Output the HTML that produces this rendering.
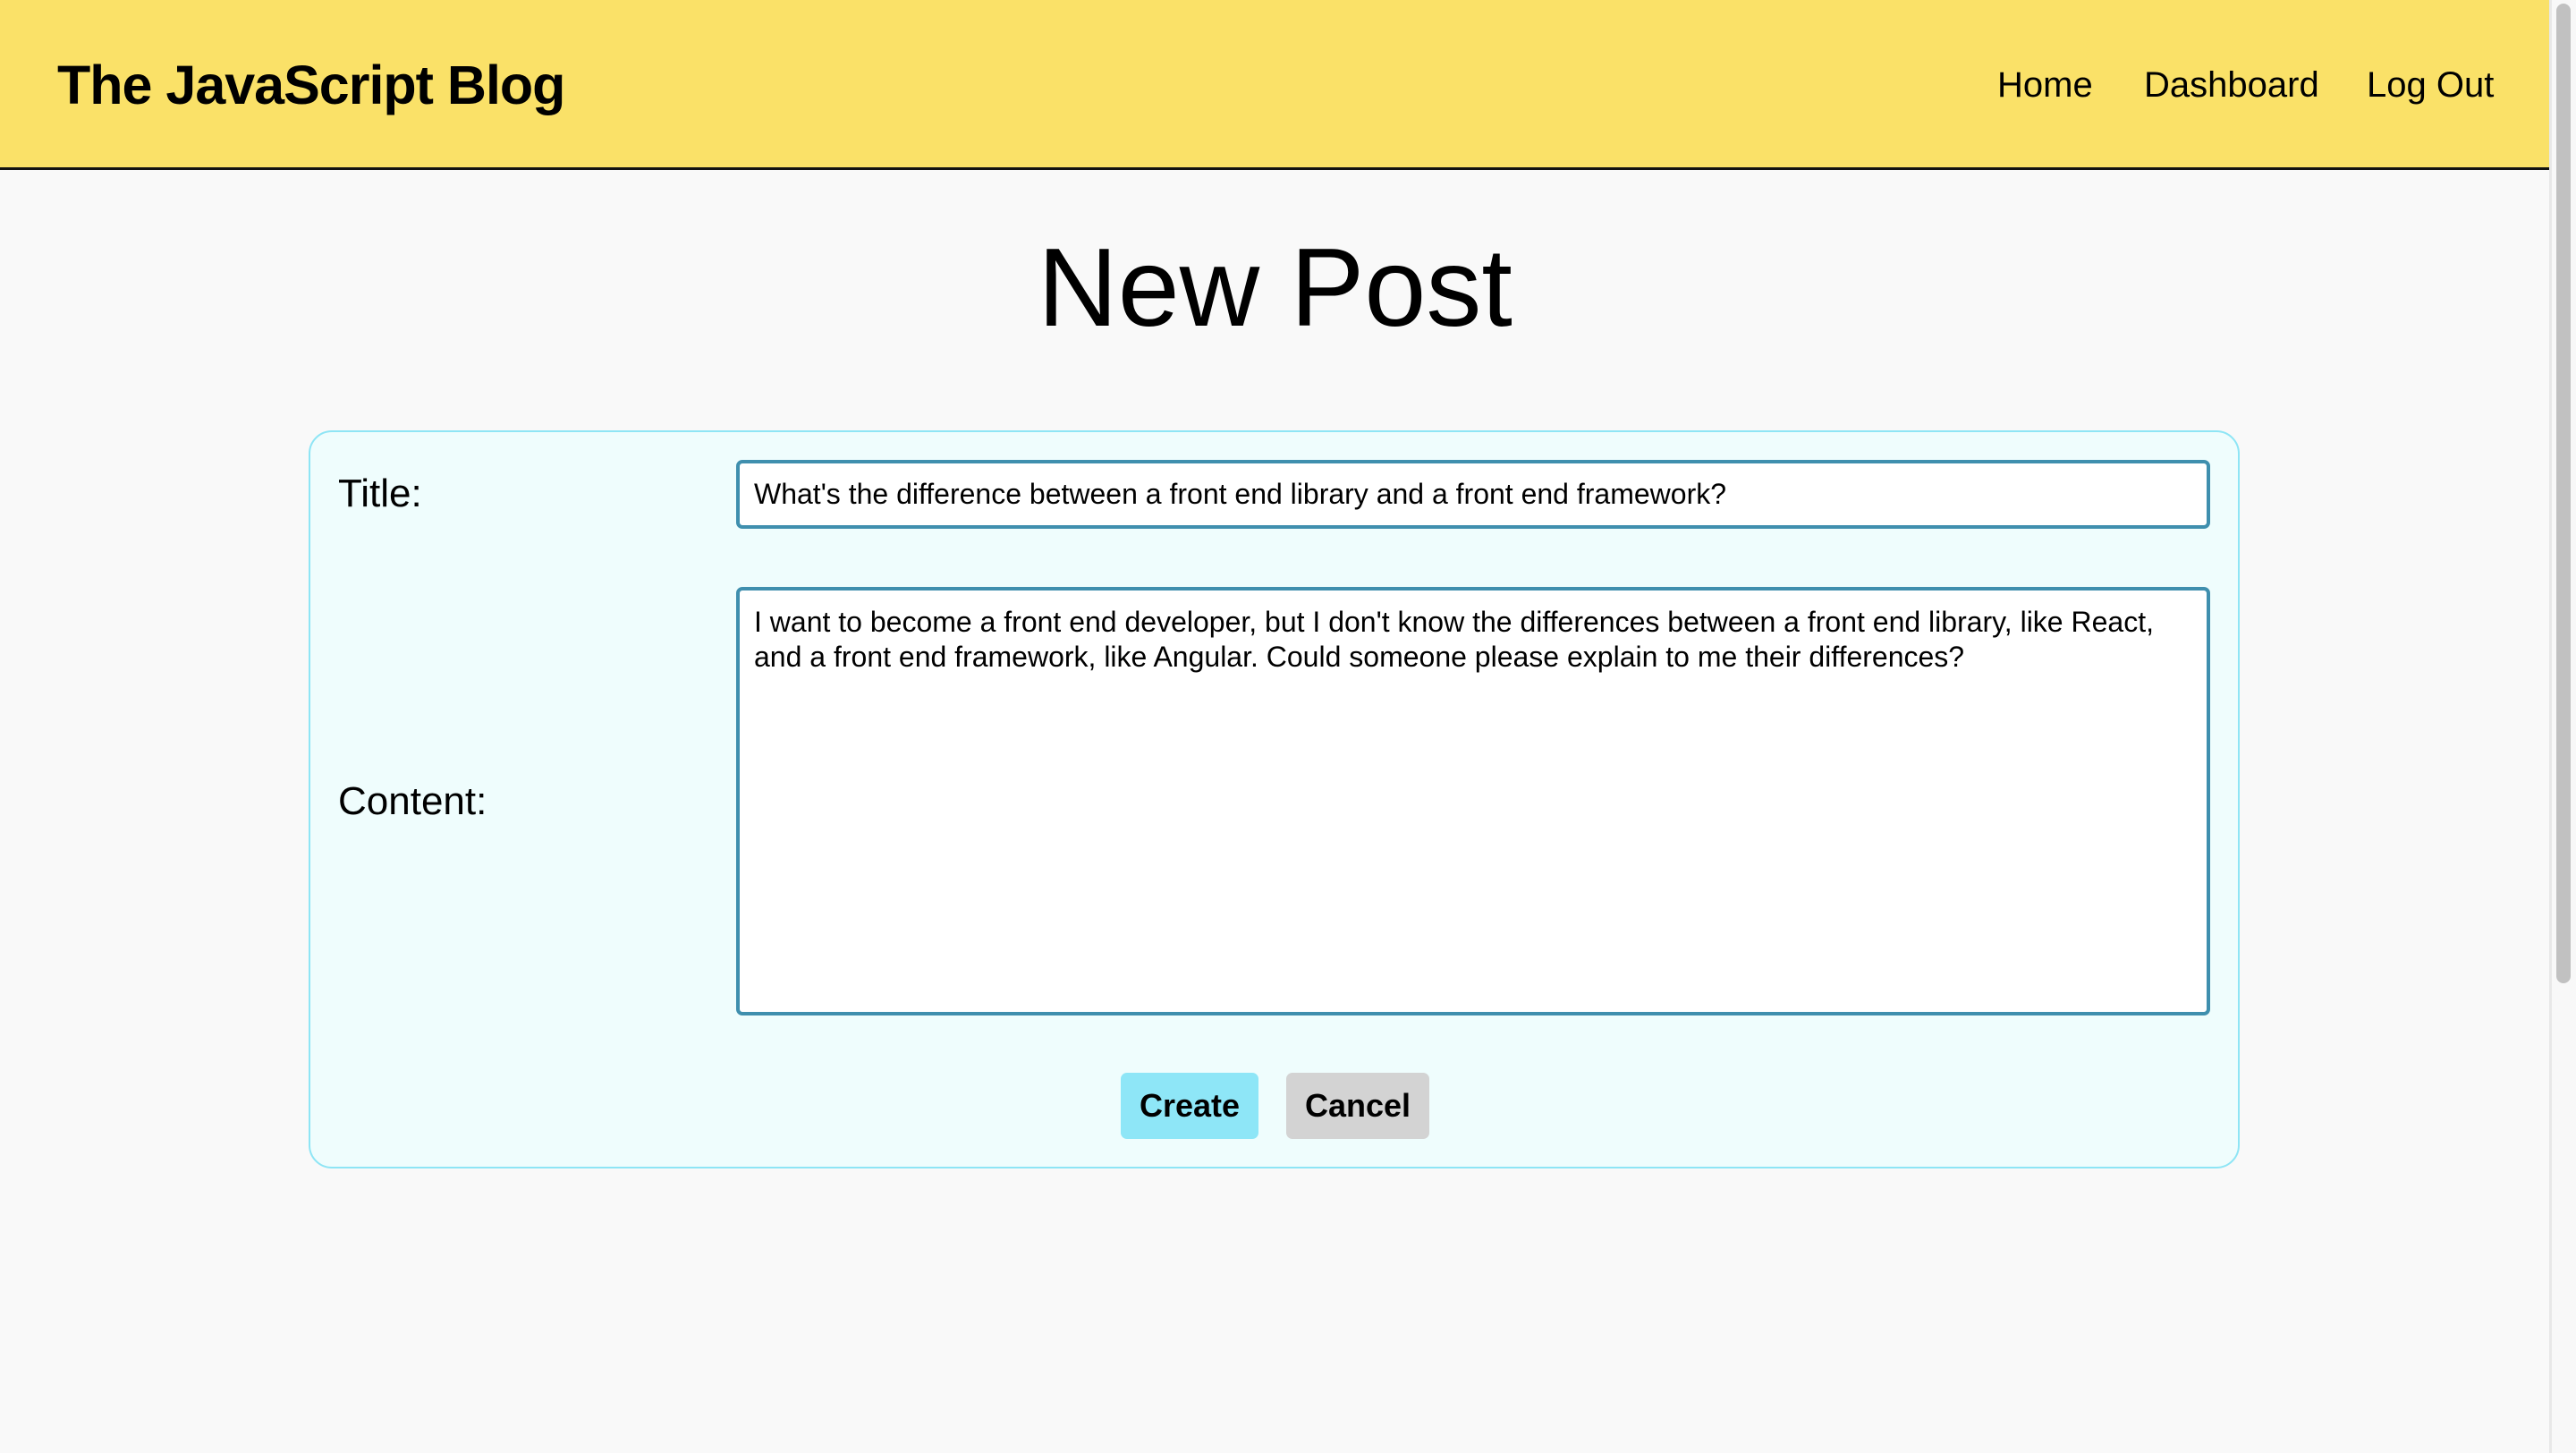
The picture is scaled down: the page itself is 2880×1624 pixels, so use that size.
<!DOCTYPE html>
<html><head><meta charset="utf-8">
<style>
html,body{margin:0;padding:0}
body{width:2880px;height:1624px;background:#f9f9f9;font-family:"Liberation Sans",Arial,sans-serif;position:relative;overflow:hidden;color:#000}
.hdr{position:absolute;left:0;top:0;width:2850px;height:187px;background:#fae168;border-bottom:3px solid #111}
.logo{position:absolute;left:64px;top:60px;font-size:61px;font-weight:bold;letter-spacing:-1px;white-space:nowrap}
.nav{position:absolute;top:73px;font-size:40px;white-space:nowrap}
.sb{position:absolute;left:2850px;top:0;width:30px;height:1624px;background:#f8f8f8;border-left:3px solid #e8e8e8;box-sizing:border-box}
.thumb{position:absolute;left:2858px;top:4px;width:16px;height:1095px;background:#c1c1c1;border-radius:8px}
h1{position:absolute;left:0;width:2851px;top:254px;margin:0;text-align:center;font-size:124px;font-weight:300;line-height:1.1}
.card{position:absolute;left:345px;top:481px;width:2159px;height:825px;box-sizing:border-box;border:2px solid #8ee5f5;border-radius:26px;background:#effdfd}
.lbl{position:absolute;font-size:44px;white-space:nowrap}
.inp{position:absolute;left:823px;width:1648px;box-sizing:border-box;border:4px solid #3f8fae;border-radius:7px;background:#fff;font-size:32px;padding:0 0 0 16px;white-space:nowrap}
.btn{position:absolute;top:1199px;height:74px;border-radius:7px;font-size:36px;font-weight:bold;text-align:center;line-height:74px}
</style></head><body>
<div class="hdr"></div>
<div class="logo">The JavaScript Blog</div>
<div class="nav" style="left:2233px">Home</div>
<div class="nav" style="left:2397px">Dashboard</div>
<div class="nav" style="left:2646px">Log Out</div>
<div class="sb"></div><div class="thumb"></div>
<h1>New Post</h1>
<div class="card"></div>
<div class="lbl" style="left:378px;top:527px">Title:</div>
<div class="lbl" style="left:378px;top:871px">Content:</div>
<div class="inp" style="top:514px;height:77px;line-height:69px">What's the difference between a front end library and a front end framework?</div>
<div class="inp" style="top:656px;height:479px;line-height:39px;padding-top:16px">I want to become a front end developer, but I don't know the differences between a front end library, like React,<br>and a front end framework, like Angular. Could someone please explain to me their differences?</div>
<div class="btn" style="left:1253px;width:154px;background:#8ee6f7">Create</div>
<div class="btn" style="left:1438px;width:160px;background:#d3d3d3">Cancel</div>
</body></html>
